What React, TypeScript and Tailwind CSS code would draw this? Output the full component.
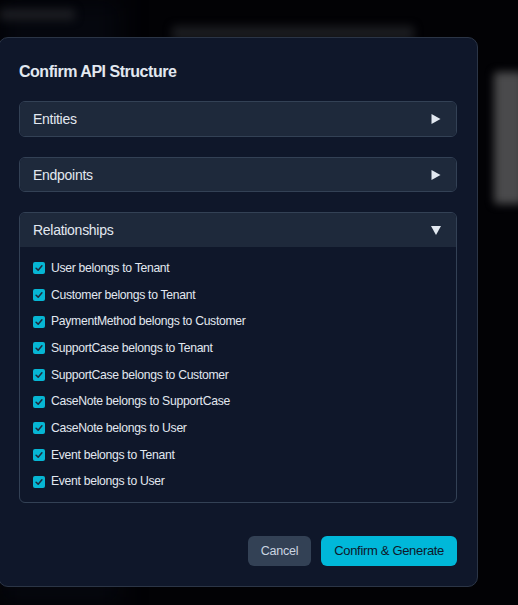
import React, { useState } from "react";

const RELATIONSHIPS = [
  "User belongs to Tenant",
  "Customer belongs to Tenant",
  "PaymentMethod belongs to Customer",
  "SupportCase belongs to Tenant",
  "SupportCase belongs to Customer",
  "CaseNote belongs to SupportCase",
  "CaseNote belongs to User",
  "Event belongs to Tenant",
  "Event belongs to User",
];

function Check({ checked }: { checked: boolean }) {
  return (
    <span
      className={`flex h-[12px] w-[12px] shrink-0 items-center justify-center rounded-[2px] ${
        checked ? "bg-[#06b6d4]" : "border border-slate-500 bg-transparent"
      }`}
    >
      {checked && (
        <svg viewBox="0 0 12 12" className="h-[10px] w-[10px]">
          <path d="M2.5 6.3 L5 8.6 L9.5 3.4" fill="none" stroke="#1e293b" strokeWidth="1.8" strokeLinecap="round" strokeLinejoin="round" />
        </svg>
      )}
    </span>
  );
}

function Arrow({ open }: { open: boolean }) {
  return open ? (
    <svg viewBox="0 0 10 9" className="h-[9px] w-[10px]">
      <path d="M0 0 H10 L5 9 Z" fill="#e2e8f0" />
    </svg>
  ) : (
    <svg viewBox="0 0 10 10" className="h-[10px] w-[10px]">
      <path d="M0.5 0 L9.5 5 L0.5 10 Z" fill="#e2e8f0" />
    </svg>
  );
}

function Section({
  title,
  open,
  onToggle,
  children,
}: {
  title: string;
  open: boolean;
  onToggle: () => void;
  children?: React.ReactNode;
}) {
  return (
    <div className="overflow-hidden rounded-md border border-[#334155]">
      <button
        onClick={onToggle}
        className="flex h-[33.7px] w-full items-center justify-between bg-[#1e293b] pl-[13px] pr-[15px] text-left text-sm tracking-[-0.02em] text-[#e2e8f0]"
      >
        <span>{title}</span>
        <Arrow open={open} />
      </button>
      {open && children}
    </div>
  );
}

export default function App() {
  const [open, setOpen] = useState<Record<string, boolean>>({
    entities: false,
    endpoints: false,
    relationships: true,
  });
  const [checked, setChecked] = useState<boolean[]>(RELATIONSHIPS.map(() => true));

  const toggle = (k: string) => setOpen((o) => ({ ...o, [k]: !o[k] }));

  return (
    <div
      className="relative h-[605px] w-full overflow-hidden bg-[#020205]"
      style={{ fontFamily: '"Liberation Sans", Arial, sans-serif' }}
    >
      {/* blurred page behind the dialog */}
      <div className="absolute inset-y-0 left-0 w-[120px] bg-[#05070e] blur-md" />
      <div className="absolute left-0 top-[9px] h-[11px] w-[75px] rounded bg-[#1c1d22] blur-[4px]" />
      <div className="absolute left-[172px] top-[26px] h-[14px] w-[242px] rounded bg-[#1b1c20] blur-[4px]" />
      <div className="absolute left-[494px] top-[72px] h-[132px] w-[30px] rounded bg-[#4a4a4c] blur-[4px]" />

      {/* dialog */}
      <div className="absolute left-[-2px] top-[37px] w-[480px] rounded-[10px] border border-[#2b3546] bg-[#0f172a] p-5">
        <h2 className="mb-[15px] text-[16px] font-bold leading-[28px] tracking-[-0.03em] text-[#e2e8f0]">
          Confirm API Structure
        </h2>

        <div className="flex flex-col gap-5">
          <Section title="Entities" open={open.entities} onToggle={() => toggle("entities")}>
            <div className="p-3 text-xs text-slate-400">No entities</div>
          </Section>
          <Section title="Endpoints" open={open.endpoints} onToggle={() => toggle("endpoints")}>
            <div className="p-3 text-xs text-slate-400">No endpoints</div>
          </Section>
          <Section
            title="Relationships"
            open={open.relationships}
            onToggle={() => toggle("relationships")}
          >
            <div className="flex flex-col gap-2 pb-[11px] pl-[13px] pr-3 pt-3">
              {RELATIONSHIPS.map((r, i) => (
                <label
                  key={r}
                  className="flex cursor-pointer items-center gap-[6px] text-[12.2px] leading-[18.67px] tracking-[-0.025em] text-[#e2e8f0]"
                  onClick={() =>
                    setChecked((c) => c.map((v, j) => (j === i ? !v : v)))
                  }
                >
                  <Check checked={checked[i]} />
                  <span>{r}</span>
                </label>
              ))}
            </div>
          </Section>
        </div>

        <div className="mt-[33px] flex justify-end gap-[10px]">
          <button className="h-[30px] rounded-md bg-[#334155] px-[13px] text-[12.5px] tracking-[-0.02em] text-[#cbd5e1]">
            Cancel
          </button>
          <button className="h-[30px] rounded-md bg-[#00b8d9] px-[13px] text-[13px] font-medium tracking-[-0.025em] text-[#0f172a]">
            Confirm &amp; Generate
          </button>
        </div>
      </div>
    </div>
  );
}
